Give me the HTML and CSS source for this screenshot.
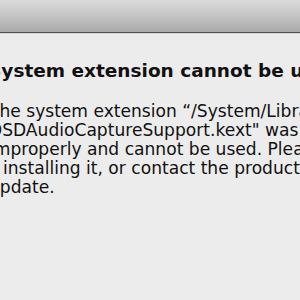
FILE: index.html
```html
<!DOCTYPE html>
<html>
<head>
<meta charset="utf-8">
<link rel="stylesheet" href="styles.css">
</head>
<body>
<div class="window">
  <div class="titlebar"></div>
  <div class="content">
    <div class="title">System extension cannot be used</div>
    <div class="message">
      <div class="line">The system extension “/System/Library/Extensions/</div>
      <div class="line">DSDAudioCaptureSupport.kext" was installed</div>
      <div class="line">improperly and cannot be used. Please try</div>
      <div class="line indent">installing it, or contact the product’s vendor for an</div>
      <div class="line">update.</div>
    </div>
  </div>
</div>
</body>
</html>
```
FILE: styles.css
```css
html, body {
  margin: 0;
  padding: 0;
  background: #ececec;
  overflow: hidden;
}
.window {
  width: 300px;
  height: 300px;
  overflow: hidden;
  background: #ececec;
}
.titlebar {
  height: 32px;
  background: linear-gradient(to bottom, #dadada 0%, #c4c4c4 50%, #a9a9a9 100%);
  border-bottom: 1px solid #505050;
  box-shadow: 0 1px 0 #d6d6d6;
}
.content {
  margin-left: -12px;
  padding-top: 27px;
  font-family: "DejaVu Sans", "Liberation Sans", sans-serif;
  color: #111;
  white-space: nowrap;
}
.title {
  font-weight: bold;
  font-size: 18.5px;
  line-height: 22px;
}
.message {
  margin-top: 20px;
  margin-left: 1px;
  font-size: 17.1px;
  line-height: 19px;
}
.indent {
  padding-left: 14px;
}
```
